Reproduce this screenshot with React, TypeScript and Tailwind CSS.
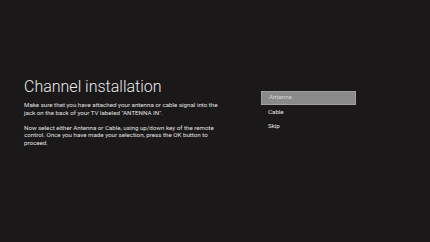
export default function App() {
  return (
    <div
      className="w-[430px] h-[242px] bg-[#1a1819] overflow-hidden flex pl-[24px] pt-[77px]"
      style={{ fontFamily: "Roboto, 'Noto Sans', sans-serif" }}
    >
      <div className="w-[200px] text-[#e6e6e6]">
        <h1 className="text-[16px] leading-[20px] font-light text-[#ececec]">Channel installation</h1>
        <div className="mt-[5px] text-[6.2px] leading-[7.5px] text-[#e0e0e0]">
          <p>
            Make sure that you have attached your antenna or cable signal into the jack on the back of your TV labeled "ANTENNA IN".
          </p>
          <p className="mt-[7.5px]">
            Now select either Antenna or Cable, using up/down key of the remote control. Once you have made your selection, press the OK button to proceed.
          </p>
        </div>
      </div>
      <div className="ml-[37px] mt-[14px] w-[95px] flex flex-col text-[6.2px]">
        <div className="h-[14px] flex items-center px-[7px] bg-[#8a8a8a] border border-[#a0a0a0] text-[#d4d4d4]">Antenna</div>
        <div className="h-[15px] flex items-center px-[7px] text-[#e6e6e6]">Cable</div>
        <div className="h-[14px] flex items-center px-[7px] text-[#e6e6e6]">Skip</div>
      </div>
    </div>
  );
}
